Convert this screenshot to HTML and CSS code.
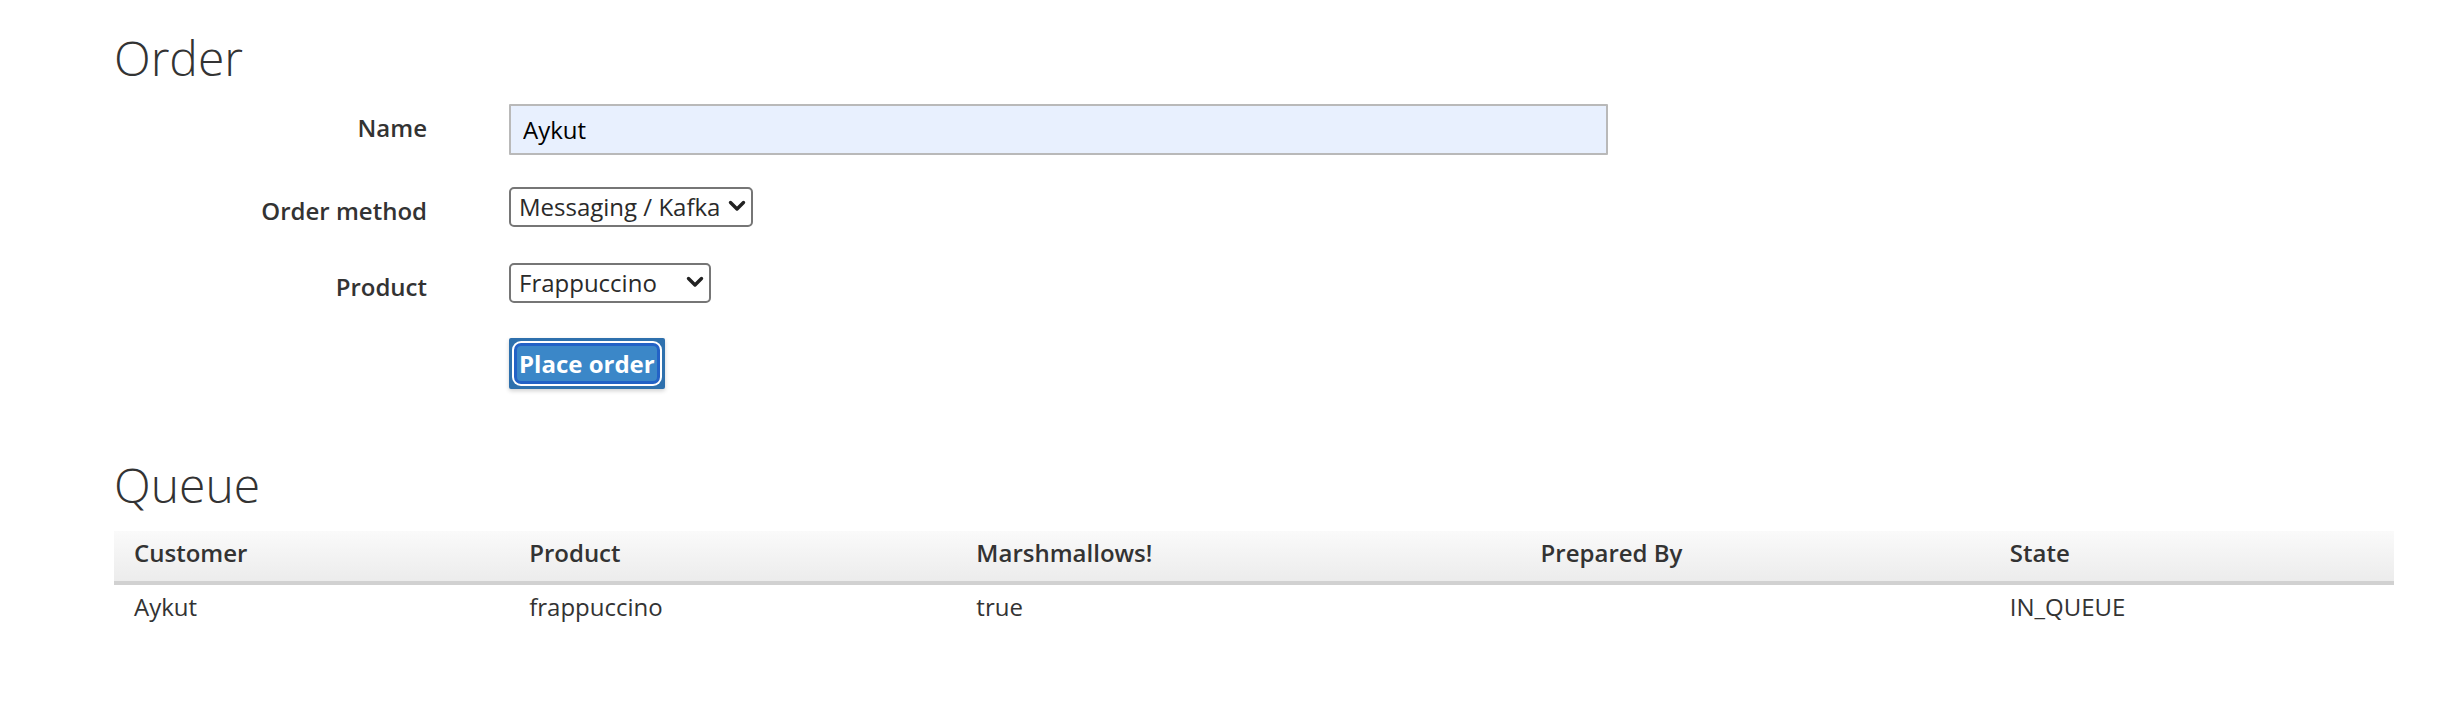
FILE: index.html
```html
<!DOCTYPE html>
<html lang="en">
<head>
<meta charset="utf-8">
<title>Order</title>
<link rel="stylesheet" href="styles.css">
</head>
<body>
<main class="page">
  <h1 class="heading">Order</h1>
  <form class="order-form">
    <div class="form-row">
      <label class="form-label" for="name">Name</label>
      <div class="form-control">
        <input id="name" class="text-input" type="text" value="Aykut">
      </div>
    </div>
    <div class="form-row">
      <label class="form-label" for="method">Order method</label>
      <div class="form-control">
        <span class="select-wrap">
          <select id="method" class="select select-method">
            <option>Messaging / Kafka</option>
            <option>HTTP</option>
          </select>
          <svg class="chevron" viewBox="0 0 18 12" width="18" height="12" aria-hidden="true"><polyline points="2.5,2.5 9,9 15.5,2.5" fill="none" stroke="#222" stroke-width="3.4" stroke-linecap="round" stroke-linejoin="round"/></svg>
        </span>
      </div>
    </div>
    <div class="form-row form-row-last">
      <label class="form-label" for="product">Product</label>
      <div class="form-control">
        <span class="select-wrap">
          <select id="product" class="select select-product">
            <option>Frappuccino</option>
            <option>Espresso</option>
            <option>Latte</option>
          </select>
          <svg class="chevron" viewBox="0 0 18 12" width="18" height="12" aria-hidden="true"><polyline points="2.5,2.5 9,9 15.5,2.5" fill="none" stroke="#222" stroke-width="3.4" stroke-linecap="round" stroke-linejoin="round"/></svg>
        </span>
      </div>
    </div>
    <div class="form-row form-row-actions">
      <span class="form-label form-label-empty"></span>
      <div class="form-control">
        <button type="button" class="btn"><span class="btn-inner">Place order</span></button>
      </div>
    </div>
  </form>

  <h2 class="heading">Queue</h2>
  <table class="queue">
    <colgroup>
      <col class="col-customer">
      <col class="col-product">
      <col class="col-marsh">
      <col class="col-prepared">
      <col class="col-state">
    </colgroup>
    <thead>
      <tr>
        <th>Customer</th>
        <th>Product</th>
        <th>Marshmallows!</th>
        <th>Prepared By</th>
        <th>State</th>
      </tr>
    </thead>
    <tbody>
      <tr>
        <td>Aykut</td>
        <td>frappuccino</td>
        <td>true</td>
        <td></td>
        <td>IN_QUEUE</td>
      </tr>
    </tbody>
  </table>
</main>
</body>
</html>
```
FILE: styles.css
```css
* {
  box-sizing: border-box;
}

html, body {
  margin: 0;
  background: #ffffff;
}

body {
  font-family: "Open Sans", "Liberation Sans", sans-serif;
  font-size: 24px;
  color: #333333;
}

.page {
  padding: 30px 66px 40px 114px;
}

.heading {
  margin: 0 0 18px 0;
  font-size: 48px;
  font-weight: 300;
  line-height: 56px;
  color: #333333;
}

.order-form {
  display: flex;
  flex-direction: column;
  margin-bottom: 68px;
}

.form-row {
  display: flex;
  align-items: flex-start;
  margin-bottom: 32px;
}

.form-row-last {
  margin-bottom: 31px;
}

.form-row-actions {
  margin-bottom: 0;
}

.form-label {
  flex: 0 0 395px;
  text-align: right;
  padding: 9px 82px 5px 0;
  line-height: 30px;
  font-weight: 600;
  color: #333333;
  min-height: 44px;
}

.form-label-empty {
  min-height: 0;
  padding: 0;
}

.form-control {
  display: flex;
}

.text-input {
  width: 1099px;
  height: 51px;
  padding: 0 12px;
  border: 2px solid #b9b9b9;
  border-radius: 1px;
  background: #e8f0fe;
  font-family: inherit;
  font-size: 24px;
  color: #000000;
  outline: none;
}

.select-wrap {
  position: relative;
  display: inline-flex;
}

.select {
  appearance: none;
  -webkit-appearance: none;
  height: 40px;
  padding: 0 24px 0 8px;
  border: 2px solid #767676;
  border-radius: 5px;
  background: #ffffff;
  font-family: inherit;
  font-size: 24px;
  color: #2a2a2a;
  line-height: 36px;
}

.select-method {
  width: 244px;
}

.select-product {
  width: 202px;
}

.chevron {
  position: absolute;
  right: 7px;
  top: 13px;
  pointer-events: none;
}

.btn {
  display: inline-flex;
  padding: 3px;
  border: 0;
  border-radius: 2px;
  background: #2e70ad;
  box-shadow: 0 2px 4px rgba(0, 0, 0, 0.18);
  cursor: pointer;
  font-family: inherit;
}

.btn-inner {
  display: block;
  margin: 2px;
  padding: 0 2px;
  height: 41px;
  border: 3px solid #2362c6;
  border-radius: 7px;
  box-shadow: 0 0 0 2px #ffffff;
  background: #3b87c8;
  color: #ffffff;
  font-size: 24px;
  font-weight: 700;
  line-height: 35px;
}

.queue {
  width: 100%;
  border-collapse: collapse;
  table-layout: fixed;
}

.col-customer { width: 395px; }
.col-product { width: 447px; }
.col-marsh { width: 564px; }
.col-prepared { width: 469px; }
.col-state { width: 404px; }

.queue th,
.queue td {
  text-align: left;
  padding: 6px 20px 12px 20px;
  line-height: 32px;
  font-size: 24px;
  color: #333333;
}

.queue thead th {
  font-weight: 600;
  background: linear-gradient(to bottom, #fafafa 0%, #ececec 100%);
  border-bottom: 4px solid #d1d1d1;
}

.queue td {
  font-weight: 400;
}
```
